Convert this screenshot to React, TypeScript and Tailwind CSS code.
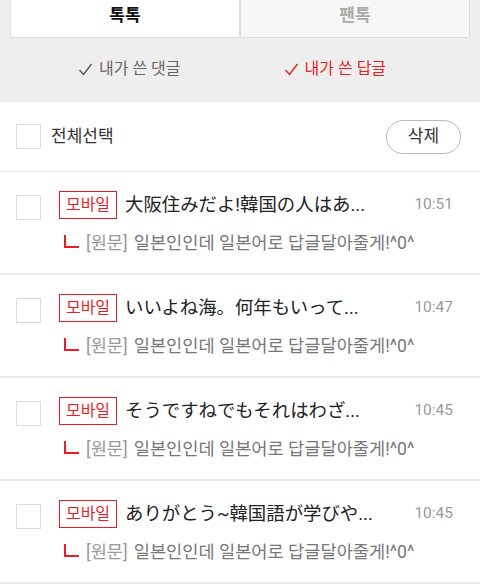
import React from "react";

const RED = "#ec1c24";

const rows = [
  { title: "大阪住みだよ!韓国の人はあ...", time: "10:51" },
  { title: "いいよね海。何年もいって...", time: "10:47" },
  { title: "そうですねでもそれはわざ...", time: "10:45" },
  { title: "ありがとう~韓国語が学びや...", time: "10:45" },
];

function Check({ color }: { color: string }) {
  return (
    <svg width="15" height="14" viewBox="0 0 15 14" className="shrink-0">
      <path d="M1.5 8 L5.5 12.5 L13.5 2" fill="none" stroke={color} strokeWidth="1.4" />
    </svg>
  );
}

export default function App() {
  return (
    <div
      className="w-[480px] h-[585px] overflow-hidden bg-white"
      style={{ fontFamily: '"Roboto", "Noto Sans CJK KR", "Noto Sans CJK JP", sans-serif' }}
    >
      <div className="bg-[#eeeeee]">
        <div className="px-[10px]">
          <div className="flex h-[38px] border border-t-0 border-[#dddddd]">
            <div className="flex-1 bg-white flex justify-center pt-[3px] text-[17px] leading-[24px] font-bold text-[#111]">
              톡톡
            </div>
            <div className="flex-1 bg-[#f7f7f7] border-l-2 border-[#dddddd] flex justify-center pt-[3px] text-[17px] leading-[24px] font-bold text-[#aaaaaa]">
              팬톡
            </div>
          </div>
        </div>
        <div className="h-[64px] flex items-center pl-[78px] gap-[103px] text-[16px] pb-[2px]">
          <div className="flex items-center gap-[6px] text-[#666]">
            <Check color="#555" />
            <span>내가 쓴 댓글</span>
          </div>
          <div className="flex items-center gap-[6px]" style={{ color: RED }}>
            <Check color={RED} />
            <span>내가 쓴 답글</span>
          </div>
        </div>
      </div>

      <div className="h-[70px] flex items-center justify-between pl-[16px] pr-[19px] border-b border-[#e6e6e6]">
        <div className="flex items-center gap-[10px]">
          <div className="w-[25px] h-[25px] border border-[#dddddd] bg-white" />
          <span className="text-[17px] text-[#333]">전체선택</span>
        </div>
        <button className="w-[75px] h-[34px] rounded-full border border-[#bbbbbb] bg-white text-[17px] text-[#333] flex items-center justify-center">
          삭제
        </button>
      </div>

      {rows.map((r, i) => (
        <div key={i} className="h-[103px] border-b-2 border-[#e8e8e8] flex pl-[16px] pr-[27px] pt-[19px]">
          <div className="w-[25px] h-[25px] border border-[#dddddd] bg-white mt-[4px] shrink-0" />
          <div className="ml-[18px] flex-1 flex flex-col">
            <div className="flex items-center h-[28px]">
              <span
                className="h-[28px] w-[58px] border flex items-center justify-center text-[16px] shrink-0"
                style={{ borderColor: RED, color: RED }}
              >
                모바일
              </span>
              <span className="ml-[8px] text-[18.4px] text-[#222] flex-1 whitespace-nowrap">{r.title}</span>
              <span className="text-[15.5px] text-[#999] ml-[8px]">{r.time}</span>
            </div>
            <div className="flex items-center mt-[12px] h-[24px]">
              <div
                className="ml-[5px] w-[15px] h-[13px] border-l-2 border-b-2 mb-[4px] shrink-0"
                style={{ borderColor: RED }}
              />
              <span className="ml-[7px] text-[17.6px] text-[#999]">[원문]</span>
              <span className="ml-[6px] text-[17.6px] text-[#777]">일본인인데 일본어로 답글달아줄게!^0^</span>
            </div>
          </div>
        </div>
      ))}
    </div>
  );
}
